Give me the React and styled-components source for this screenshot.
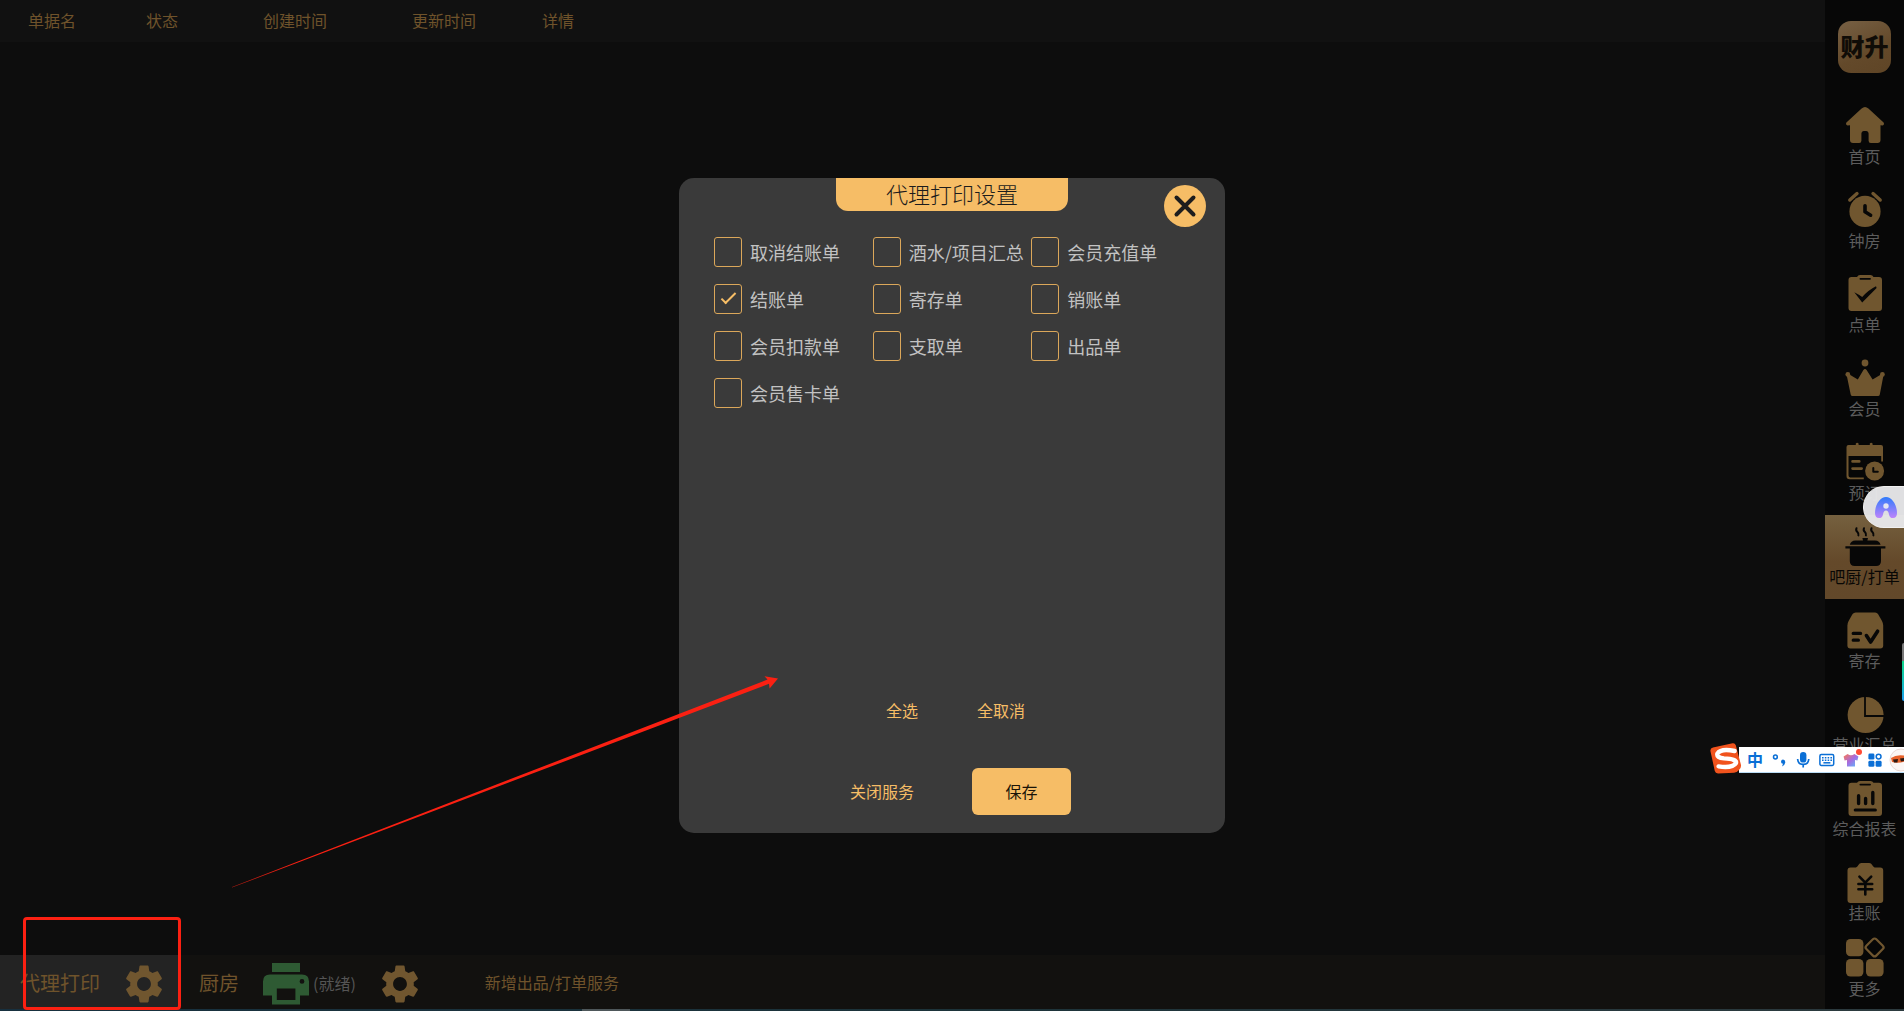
import React, { useState } from "react";
import styled, { createGlobalStyle, css } from "styled-components";

const GOLD = "#f6bd66";
const DIM_GOLD = "#70562f";
const DIM_TEXT = "#6f532b";
const DARK = "#070707";

const Global = createGlobalStyle`
  *, *::before, *::after { box-sizing: border-box; }
  html, body, #root { height: 100%; }
  body {
    margin: 0;
    background: #0d0d0d;
    overflow: hidden;
    font-family: "Noto Sans CJK SC", "Noto Sans", sans-serif;
    font-weight: 400;
    font-size: 16px;
    line-height: 22px;
  }
  button {
    font: inherit;
    border: 0;
    padding: 0;
    background: none;
    cursor: pointer;
  }
  svg { display: block; overflow: visible; flex: none; }
`;

const Page = styled.div`
  position: relative;
  display: flex;
  flex-direction: column;
  height: 100vh;
  background: ${DARK};
`;

const Shell = styled.div`
  flex: 1;
  min-height: 0;
  display: flex;
`;

const Main = styled.main`
  flex: 1;
  min-width: 0;
  display: flex;
  flex-direction: column;
  background: #0d0d0d;
`;

const Records = styled.table`
  width: 100%;
  table-layout: fixed;
  border-collapse: collapse;
  background: #111111;
  color: ${DIM_TEXT};

  th {
    height: 42px;
    padding: 0 0 2px;
    font-weight: 400;
    text-align: left;
  }
  th:first-child { padding-left: 28px; }
`;

const Col = styled.col`
  width: ${(p) => p.$w};
`;

const Body = styled.div`
  flex: 1;
`;

const ServiceBar = styled.footer`
  display: flex;
  align-items: stretch;
  height: 54px;
  background: #12110f;
  color: ${DIM_TEXT};
`;

const Service = styled.div`
  display: flex;
  align-items: center;
  font-size: 20px;
  padding: 4px 0 0 ${(p) => (p.$active ? "20px" : "19px")};
  ${(p) =>
    p.$active &&
    css`
      width: 180px;
      background: #232323;
    `}
`;

const ServiceName = styled.span`
  margin-top: -3px;
`;

const Gear = styled.button`
  margin-left: ${(p) => p.$gap};
`;

const PrinterSlot = styled.span`
  margin: 0 0 0 24px;
`;

const Ready = styled.span`
  margin: -3px 0 0 4px;
  font-size: 16px;
  color: #555555;
`;

const AddService = styled.button`
  && {
    margin-left: 62px;
    color: ${DIM_TEXT};
  }
`;

const Side = styled.aside`
  width: 79px;
  display: flex;
  flex-direction: column;
  overflow: hidden;
  background: ${DARK};
`;

const Brand = styled.div`
  height: 95px;
  flex: none;
  padding-top: 21px;
  display: flex;
  justify-content: center;
  align-items: flex-start;
`;

const BrandTile = styled.div`
  display: flex;
  align-items: center;
  justify-content: center;
  width: 53px;
  height: 52px;
  padding-bottom: 3px;
  border-radius: 13px;
  background: linear-gradient(155deg, #776044, #63492a 60%, #5f4526);
  color: #100c07;
  font-size: 24px;
  font-weight: 900;
  line-height: 30px;
`;

const NavItem = styled.a`
  display: flex;
  flex-direction: column;
  align-items: center;
  height: ${(p) => (p.$tight ? "74px" : "84px")};
  flex: none;
  padding-top: ${(p) => (p.$tight ? "2px" : "10px")};
  color: ${(p) => (p.$active ? "#080705" : "#5c5c5c")};
  background: ${(p) =>
    p.$active
      ? "linear-gradient(180deg, #75603f, #64492a 55%, #62482a)"
      : "transparent"};
  text-decoration: none;
  white-space: nowrap;
`;

const Taskbar = styled.div`
  height: 2px;
  flex: none;
  padding-left: 582px;
  background: linear-gradient(90deg, #17303f, #1c3339 50%, #2c3a3e);

  &::before {
    content: "";
    display: block;
    width: 48px;
    height: 2px;
    background: #4e575a;
  }
`;

const Backdrop = styled.div`
  position: absolute;
  inset: 0;
  display: flex;
  align-items: center;
  justify-content: center;
`;

const Dialog = styled.form`
  position: relative;
  display: flex;
  flex-direction: column;
  width: 546px;
  height: 655px;
  border-radius: 15px;
  background: #3a3a3a;
`;

const Title = styled.h1`
  align-self: center;
  width: 232px;
  height: 33px;
  margin: 0;
  border-radius: 0 0 12px 12px;
  background: ${GOLD};
  color: #1c1c1c;
  font-size: 22px;
  font-weight: 300;
  line-height: 31px;
  text-align: center;
`;

const Close = styled.button`
  && {
    position: absolute;
    top: 7px;
    right: 19px;
    display: flex;
    align-items: center;
    justify-content: center;
    width: 42px;
    height: 42px;
    border-radius: 50%;
    background: ${GOLD};
  }
`;

const Options = styled.div`
  flex: 1;
  display: grid;
  grid-template-columns: repeat(3, 1fr);
  grid-auto-rows: 30px;
  row-gap: 17px;
  align-content: start;
  padding: 26px 35px 0;
`;

const Option = styled.label`
  display: flex;
  align-items: center;
  gap: 8px;
  color: #c2c2c2;
  font-size: 18px;
  white-space: nowrap;
  cursor: pointer;
`;

const Tick = styled.input`
  appearance: none;
  flex: none;
  display: grid;
  place-items: center;
  width: 28px;
  height: 30px;
  margin: 0;
  border: 1px solid #dba75a;
  border-radius: 3px;

  &:checked::before {
    content: "";
    width: 15px;
    height: 7px;
    margin-top: -6px;
    border-left: 2px solid ${GOLD};
    border-bottom: 2px solid ${GOLD};
    transform: rotate(-45deg);
  }
`;

const Actions = styled.div`
  display: flex;
  align-items: center;
  gap: ${(p) => p.$gap};
  padding-left: ${(p) => p.$left};
  margin-bottom: ${(p) => p.$below};
`;

const TextButton = styled.button`
  && {
    padding-bottom: 2px;
    color: ${GOLD};
  }
`;

const Save = styled.button`
  && {
    width: 99px;
    height: 47px;
    padding-bottom: 2px;
    border-radius: 6px;
    background: ${GOLD};
    color: #1a1408;
  }
`;

const RedBox = styled.div`
  position: absolute;
  left: 23px;
  bottom: 1px;
  width: 158px;
  height: 93px;
  border: 3px solid #fb2012;
  border-radius: 4px;
  pointer-events: none;
`;

const Arrow = styled.svg`
  position: absolute;
  left: 232px;
  top: 676px;
  pointer-events: none;
`;

const Assistant = styled.button`
  && {
    position: absolute;
    top: 486px;
    right: 0;
    display: flex;
    align-items: center;
    width: 41px;
    height: 42px;
    padding-left: 11px;
    border: 1px solid #f0f0f0;
    border-right: 0;
    border-radius: 21px 0 0 21px;
    background: rgba(232, 232, 234, 0.96);
  }
`;

const EdgeMark = styled.div`
  position: absolute;
  top: 643px;
  right: 0;
  width: 2px;
  height: 58px;
  border-radius: 2px 0 0 2px;
  background: linear-gradient(180deg, #777777 0 18px, #10d68a 18px, #12b9c9 44px, #1d9bf0);
`;

const Ime = styled.div`
  position: absolute;
  top: 747px;
  right: 0;
  width: 165px;
  height: 26px;
  display: flex;
  align-items: center;
  background: #ffffff;
  border-bottom: 1px solid #b9dcf5;
`;

const ImeLogo = styled.svg`
  position: absolute;
  left: -29px;
  top: -4px;
`;

const ImeTools = styled.div`
  display: flex;
  align-items: center;
  gap: 8px;
  padding-left: 8px;
  height: 25px;
  width: 165px;
  overflow: hidden;
`;

const ImeText = styled.span`
  flex: none;
  width: 16px;
  padding-bottom: 2px;
  color: #0a6fd6;
  font-size: 16px;
  font-weight: 700;
  text-align: center;
`;

const RedDot = styled.span`
  position: absolute;
  top: 2px;
  left: 117px;
  width: 6px;
  height: 6px;
  border-radius: 50%;
  background: #ff4a34;
`;

const cut = { fill: "none", strokeLinecap: "round", strokeLinejoin: "round" };

const NavIcon = ({ ink, children }) => (
  <svg width="40" height="40" viewBox="0 0 40 40" fill={ink} stroke="none" aria-hidden="true">
    {children}
  </svg>
);

const icons = {
  home: (
    <>
      <path d="M16.6 3.6 Q20 .6 23.4 3.6 L38.6 17.6 Q39.8 19.6 37.6 20.6 L35.5 20.2 V35 Q35.5 38 32.5 38 H25.8 Q23.6 38 23.6 35.8 V28.5 Q23.6 26 21.4 26 H18.6 Q16.4 26 16.4 28.5 V35.8 Q16.4 38 14.2 38 H8 Q5 38 5 35 V20.2 L2.6 20.6 Q.2 19.6 1.4 17.6 Z" />
    </>
  ),
  clock: (
    <>
      <circle cx="20" cy="22.4" r="15.6" />
      <path d="M4.8 11 12 4.6 M35.2 11 28 4.6" {...cut} stroke={DIM_GOLD} strokeWidth="3.4" />
      <path d="M20 16.8 V22.8 L25.6 26.2" {...cut} stroke={DARK} strokeWidth="3.6" />
    </>
  ),
  order: (
    <>
      <path d="M6.5 4 H12 Q13 2 15 2 H25.5 Q27.5 2 28.5 4 H34 Q37 4 37 7 V35 Q37 38 34 38 H6.5 Q3.5 38 3.5 35 V7 Q3.5 4 6.5 4 Z" />
      <path d="M15.4 5.8 H25" {...cut} stroke={DARK} strokeWidth="1.8" />
      <path d="M9.3 19.2 Q14 21.6 17.2 24 Q23 17.2 31 13.2 L31.6 15 L17.2 29.4 Z" fill={DARK} />
    </>
  ),
  crown: (
    <>
      <circle cx="20" cy="6" r="3.4" />
      <circle cx="2.8" cy="17.4" r="2.4" />
      <circle cx="37.4" cy="17.4" r="2.4" />
      <path d="M1.8 18.8 L4 17.2 L12.8 22.6 L18.4 13 Q20 11 21.6 13 L27.6 22.6 L36.4 17.2 L38.4 18.8 L34.8 37.4 Q34.5 39 33 39 H7.6 Q6 39 5.7 37.4 Z" />
    </>
  ),
  booking: (
    <>
      <path d="M3.5 4 H10.8 V2.6 Q12.2 .8 13.6 2.6 V4 H24.8 V2.6 Q26.2 .8 27.6 2.6 V4 H36 Q38 4 38 6 V20.6 H36.2 V15 H3.5 V34.6 Q3.5 36.4 5.2 36.4 H18.8 V38.2 H4.6 Q1.5 38.2 1.5 35 V6 Q1.5 4 3.5 4 Z" />
      <path d="M7.6 20.4 H14.2 M7.6 27.6 H16.6" {...cut} stroke={DIM_GOLD} strokeWidth="2.8" />
      <circle cx="29.6" cy="30" r="9.5" />
      <path d="M28.3 27 V30.8 H32.8" {...cut} stroke={DARK} strokeWidth="2" />
    </>
  ),
  pot: (
    <>
      <path d="M11.5 3.2 Q10.5 5.4 12.4 7 Q14 8.6 13.4 10.4 M19 3.2 Q18 5.4 19.9 7 Q21.5 8.6 20.9 10.4 M26.5 3.2 Q25.5 5.4 27.4 7 Q29 8.6 28.4 10.4" {...cut} stroke={DARK} strokeWidth="2" />
      <path d="M17.4 13 H23 L22.4 15.6 H30 Q34.6 15.8 35.6 19.8 H4.8 Q5.8 15.8 10.4 15.6 H18 Z" />
      <path d="M.4 21.2 H40.4 V23.6 H36 V36 Q36 41 31 41 H9.8 Q4.8 41 4.8 36 V23.6 H.4 Z" />
    </>
  ),
  deposit: (
    <>
      <path d="M10.6 3.4 H30.2 Q32 3.4 33 5 L37 12 Q38.2 14.2 38.2 16.6 V36.6 Q38.2 39.6 35.2 39.6 H5.4 Q2.4 39.6 2.4 36.6 V16.6 Q2.4 14.2 3.6 12 L7.6 5 Q8.8 3.4 10.6 3.4 Z" />
      <path d="M8.2 24.4 H15.6 M8.2 31.2 H13.4" {...cut} stroke={DARK} strokeWidth="3.2" />
      <path d="M21.4 26.6 L25.6 33 L32.6 22.2" {...cut} stroke={DARK} strokeWidth="3.6" />
    </>
  ),
  pie: (
    <>
      <circle cx="20.6" cy="22" r="18" />
      <path d="M20 2.4 V23 H40" fill="none" stroke={DARK} strokeWidth="1.8" />
    </>
  ),
  report: (
    <>
      <path d="M6.5 5.8 H12 Q13 4 15 4 H25.5 Q27.5 4 28.5 5.8 H34 Q37 5.8 37 8.8 V36 Q37 39 34 39 H6.5 Q3.5 39 3.5 36 V8.8 Q3.5 5.8 6.5 5.8 Z" />
      <path d="M15.4 7.6 H25" {...cut} stroke={DARK} strokeWidth="1.9" />
      <path d="M13.6 18.8 V26.6 M20.6 21.4 V26.6 M27.8 15.4 V26.6" {...cut} stroke={DARK} strokeWidth="3.4" />
      <path d="M10.2 33 H30.4" {...cut} stroke={DARK} strokeWidth="3" />
    </>
  ),
  credit: (
    <>
      <path d="M5.5 6.4 H11 Q13 5.4 13.4 4 Q14.4 2 16.4 2 H24.2 Q26.2 2 27.2 4 Q27.6 5.4 29.6 6.4 H35.2 Q38.2 6.4 38.2 9.4 V39 Q38.2 42 35.2 42 H5.5 Q2.5 42 2.5 39 V9.4 Q2.5 6.4 5.5 6.4 Z" />
      <path d="M14.4 15.6 L20.3 21.6 L26.2 15.6 M13.4 23 H27.2 M13.4 28.2 H27.2 M20.3 22 V33.4" {...cut} stroke={DARK} strokeWidth="2.6" />
    </>
  ),
  more: (
    <>
      <rect x="1" y="2" width="17.4" height="17.2" rx="4.5" />
      <rect x="1" y="22" width="17.4" height="17.6" rx="4.5" />
      <rect x="21" y="22" width="17.6" height="17.6" rx="4.5" />
      <rect x="22.6" y="3.4" width="14" height="14" rx="2.4" transform="rotate(45 29.6 10.4)" fill="none" stroke={DIM_GOLD} strokeWidth="2.2" />
    </>
  ),
};

const NAV = [
  ["home", "首页"],
  ["clock", "钟房"],
  ["order", "点单"],
  ["crown", "会员"],
  ["booking", "预订"],
  ["pot", "吧厨/打单"],
  ["deposit", "寄存"],
  ["pie", "营业汇总"],
  ["report", "综合报表"],
  ["credit", "挂账"],
  ["more", "更多"],
];

const OPTIONS = [
  "取消结账单", "酒水/项目汇总", "会员充值单",
  "结账单", "寄存单", "销账单",
  "会员扣款单", "支取单", "出品单",
  "会员售卡单",
];

const GearIcon = () => (
  <svg width="46" height="46" viewBox="0 0 24 24" fill={DIM_GOLD} aria-hidden="true">
    <path d="M19.14 12.94c.04-.3.06-.61.06-.94 0-.32-.02-.64-.07-.94l2.03-1.58c.18-.14.23-.41.12-.61l-1.92-3.32c-.12-.22-.37-.29-.59-.22l-2.39.96c-.5-.38-1.03-.7-1.62-.94l-.36-2.54c-.04-.24-.24-.41-.48-.41h-3.84c-.24 0-.43.17-.47.41l-.36 2.54c-.59.24-1.13.57-1.62.94l-2.39-.96c-.22-.08-.47 0-.59.22L2.74 8.87c-.12.21-.08.47.12.61l2.03 1.58c-.05.3-.09.63-.09.94s.02.64.07.94l-2.03 1.58c-.18.14-.23.41-.12.61l1.92 3.32c.12.22.37.29.59.22l2.39-.96c.5.38 1.03.7 1.62.94l.36 2.54c.05.24.24.41.48.41h3.84c.24 0 .44-.17.47-.41l.36-2.54c.59-.24 1.13-.56 1.62-.94l2.39.96c.22.08.47 0 .59-.22l1.92-3.32c.12-.22.07-.47-.12-.61l-2.01-1.58zM12 15.6c-1.98 0-3.6-1.62-3.6-3.6s1.62-3.6 3.6-3.6 3.6 1.62 3.6 3.6-1.62 3.6-3.6 3.6z" />
  </svg>
);

const PrinterIcon = () => (
  <svg width="46" height="42" viewBox="0 0 46 42" fill="#2e5a33" aria-hidden="true">
    <path d="M9 0 H37 V9 H9 Z" />
    <path fillRule="evenodd" d="M7 11.5 H39 Q46 11.5 46 18.5 V32.5 H37 V41.5 H9 V32.5 H0 V18.5 Q0 11.5 7 11.5 Z M13.8 25.5 V37 H32.4 V25.5 Z M39 16 A2.4 2.4 0 1 0 39 20.8 A2.4 2.4 0 1 0 39 16 Z" />
  </svg>
);

export default function App() {
  const [checked, setChecked] = useState(["结账单"]);
  const toggle = (name) =>
    setChecked((now) => (now.includes(name) ? now.filter((n) => n !== name) : [...now, name]));

  return (
    <Page>
      <Global />
      <Shell>
        <Main>
          <Records>
            <colgroup>
              <Col $w="146px" />
              <Col $w="117px" />
              <Col $w="149px" />
              <Col $w="130px" />
              <Col $w="auto" />
            </colgroup>
            <thead>
              <tr>
                <th>单据名</th>
                <th>状态</th>
                <th>创建时间</th>
                <th>更新时间</th>
                <th>详情</th>
              </tr>
            </thead>
          </Records>
          <Body />
          <ServiceBar>
            <Service $active>
              <ServiceName>代理打印</ServiceName>
              <Gear type="button" $gap="21px" aria-label="代理打印">
                <GearIcon />
              </Gear>
            </Service>
            <Service>
              <ServiceName>厨房</ServiceName>
              <PrinterSlot>
                <PrinterIcon />
              </PrinterSlot>
              <Ready>(就绪)</Ready>
              <Gear type="button" $gap="21px" aria-label="厨房">
                <GearIcon />
              </Gear>
            </Service>
            <AddService type="button">新增出品/打单服务</AddService>
          </ServiceBar>
        </Main>

        <Side>
          <Brand>
            <BrandTile>财升</BrandTile>
          </Brand>
          {NAV.map(([icon, label]) => (
            <NavItem key={icon} href="#" $active={icon === "pot"} $tight={icon === "more"}>
              <NavIcon ink={icon === "pot" ? DARK : DIM_GOLD}>{icons[icon]}</NavIcon>
              {label}
            </NavItem>
          ))}
        </Side>
      </Shell>
      <Taskbar />

      <Backdrop>
        <Dialog role="dialog" aria-labelledby="dialog-title" onSubmit={(e) => e.preventDefault()}>
          <Title id="dialog-title">代理打印设置</Title>
          <Close type="button" aria-label="关闭">
            <svg width="22" height="22" viewBox="0 0 22 22" fill="none" stroke="#1d1d1d" strokeWidth="4" strokeLinecap="round">
              <path d="M2.5 2.5 19.5 19.5 M19.5 2.5 2.5 19.5" />
            </svg>
          </Close>
          <Options>
            {OPTIONS.map((name) => (
              <Option key={name}>
                <Tick type="checkbox" checked={checked.includes(name)} onChange={() => toggle(name)} />
                {name}
              </Option>
            ))}
          </Options>
          <Actions $gap="59px" $left="207px" $below="45px">
            <TextButton type="button" onClick={() => setChecked(OPTIONS)}>全选</TextButton>
            <TextButton type="button" onClick={() => setChecked([])}>全取消</TextButton>
          </Actions>
          <Actions $gap="58px" $left="171px" $below="18px">
            <TextButton type="button">关闭服务</TextButton>
            <Save type="submit">保存</Save>
          </Actions>
        </Dialog>
      </Backdrop>

      <Arrow width="546" height="212" viewBox="0 0 546 212" aria-hidden="true">
        <defs>
          <linearGradient id="tail" x1="0" y1="1" x2="1" y2="0">
            <stop offset="0" stopColor="#fb2012" stopOpacity=".7" />
            <stop offset=".12" stopColor="#fb2012" />
          </linearGradient>
        </defs>
        <path fill="url(#tail)" d="M0 211 L535.5 3.6 L532.5 .2 L546 2.4 L537.6 12.4 L537 7.8 L0 211.6 Z" />
      </Arrow>
      <RedBox />

      <Assistant type="button" aria-label="助手">
        <svg width="22" height="21" viewBox="0 0 22 21" aria-hidden="true">
          <defs>
            <linearGradient id="assist" x1="0" y1="0" x2="0" y2="1">
              <stop offset="0" stopColor="#2f7bfb" />
              <stop offset="1" stopColor="#bd84fb" />
            </linearGradient>
          </defs>
          <path fill="url(#assist)" d="M11 0 C17 0 22 8 22 16 Q22 21 18 21 Q14.6 21 14 17.4 Q13.4 13.6 11 13.6 Q8.6 13.6 8 17.4 Q7.4 21 4 21 Q0 21 0 16 C0 8 5 0 11 0 Z" />
          <circle cx="11" cy="9" r="2.7" fill="#e4e6f2" />
        </svg>
      </Assistant>
      <EdgeMark />

      <Ime>
        <ImeLogo width="32" height="31" viewBox="0 0 32 31" aria-hidden="true">
          <path d="M3 4.4 L22.6 .3 Q25 0 25.8 2.2 L31 22 Q31.4 25 29 27 Q27 29.6 24 29.8 L8 30.6 Q5.4 30.4 4.8 28 L.4 8 Q.2 5 3 4.4 Z" fill="#f1531d" />
          <path d="M24.6 8 Q11 5 7.4 10.6 Q6.4 14.8 14 15.4 Q27 16 26 20 Q22.6 25.4 8.6 23.4" fill="none" stroke="#fff" strokeWidth="4.4" strokeLinecap="round" />
        </ImeLogo>
        <ImeTools>
          <ImeText>中</ImeText>
          <svg width="16" height="16" viewBox="0 0 16 16" aria-hidden="true">
            <circle cx="4.4" cy="5" r="1.9" fill="none" stroke="#0a6fd6" strokeWidth="1.5" />
            <path d="M12 7.4 Q14.6 7.4 14.2 10.8 Q13.6 13.8 11 14.4 L12 11.8 Q10 11.6 10 9.8 Q10.2 7.4 12 7.4 Z" fill="#0a6fd6" />
          </svg>
          <svg width="16" height="18" viewBox="0 0 16 18" aria-hidden="true">
            <rect x="5" y="1" width="6.4" height="10.6" rx="3.2" fill="#0a6fd6" />
            <path d="M2.6 8 Q3 13.4 8.2 13.4 Q13.4 13.4 13.8 8 M8.2 13.4 V16.6" fill="none" stroke="#0a6fd6" strokeWidth="1.7" />
          </svg>
          <svg width="16" height="14" viewBox="0 0 16 14" aria-hidden="true">
            <rect x=".9" y="1.6" width="13.8" height="10.8" rx="1.4" fill="#fff" stroke="#0a6fd6" strokeWidth="1.5" />
            <path d="M3 4.8 H13 M3 7.2 H13" stroke="#0a6fd6" strokeWidth="1.5" strokeDasharray="1.6 1.2" />
            <path d="M4.4 9.8 H11.4" stroke="#0a6fd6" strokeWidth="1.5" />
          </svg>
          <svg width="16" height="16" viewBox="0 0 16 16" aria-hidden="true">
            <defs>
              <linearGradient id="shirt" x1="0" y1="0" x2="1" y2="1">
                <stop offset="0" stopColor="#ff7a4f" />
                <stop offset=".5" stopColor="#a56be0" />
                <stop offset="1" stopColor="#56c2ff" />
              </linearGradient>
            </defs>
            <path d="M4.6 2 Q8 4.6 11.4 2 L15.4 4.4 L14.4 8.4 L12 8 V14.6 H4 V8 L1.6 8.4 L.6 4.4 Z" fill="url(#shirt)" />
          </svg>
          <svg width="16" height="16" viewBox="0 0 16 16" fill="#0a6fd6" aria-hidden="true">
            <rect x="1.4" y="1.6" width="6" height="6" rx="1.4" />
            <circle cx="11.6" cy="4.6" r="2.4" fill="none" stroke="#0a6fd6" strokeWidth="1.5" />
            <rect x="1.4" y="8.8" width="6" height="6" rx="1.4" />
            <rect x="8.6" y="8.8" width="6" height="6" rx="1.4" />
          </svg>
          <svg width="24" height="24" viewBox="0 0 24 24" aria-hidden="true">
            <circle cx="10" cy="12" r="11" fill="#fbf6f4" stroke="#ead9d4" />
            <path d="M0 10 Q6 6 15 8 V13 Q8 16 1 14 Z" fill="#e8622a" />
            <path d="M2 11.6 L7 11 L6.4 14.4 L3 14.6 Z M9 10.6 L14 10 V13 L10 13.4 Z" fill="#2a1a14" />
          </svg>
        </ImeTools>
        <RedDot />
      </Ime>
    </Page>
  );
}
